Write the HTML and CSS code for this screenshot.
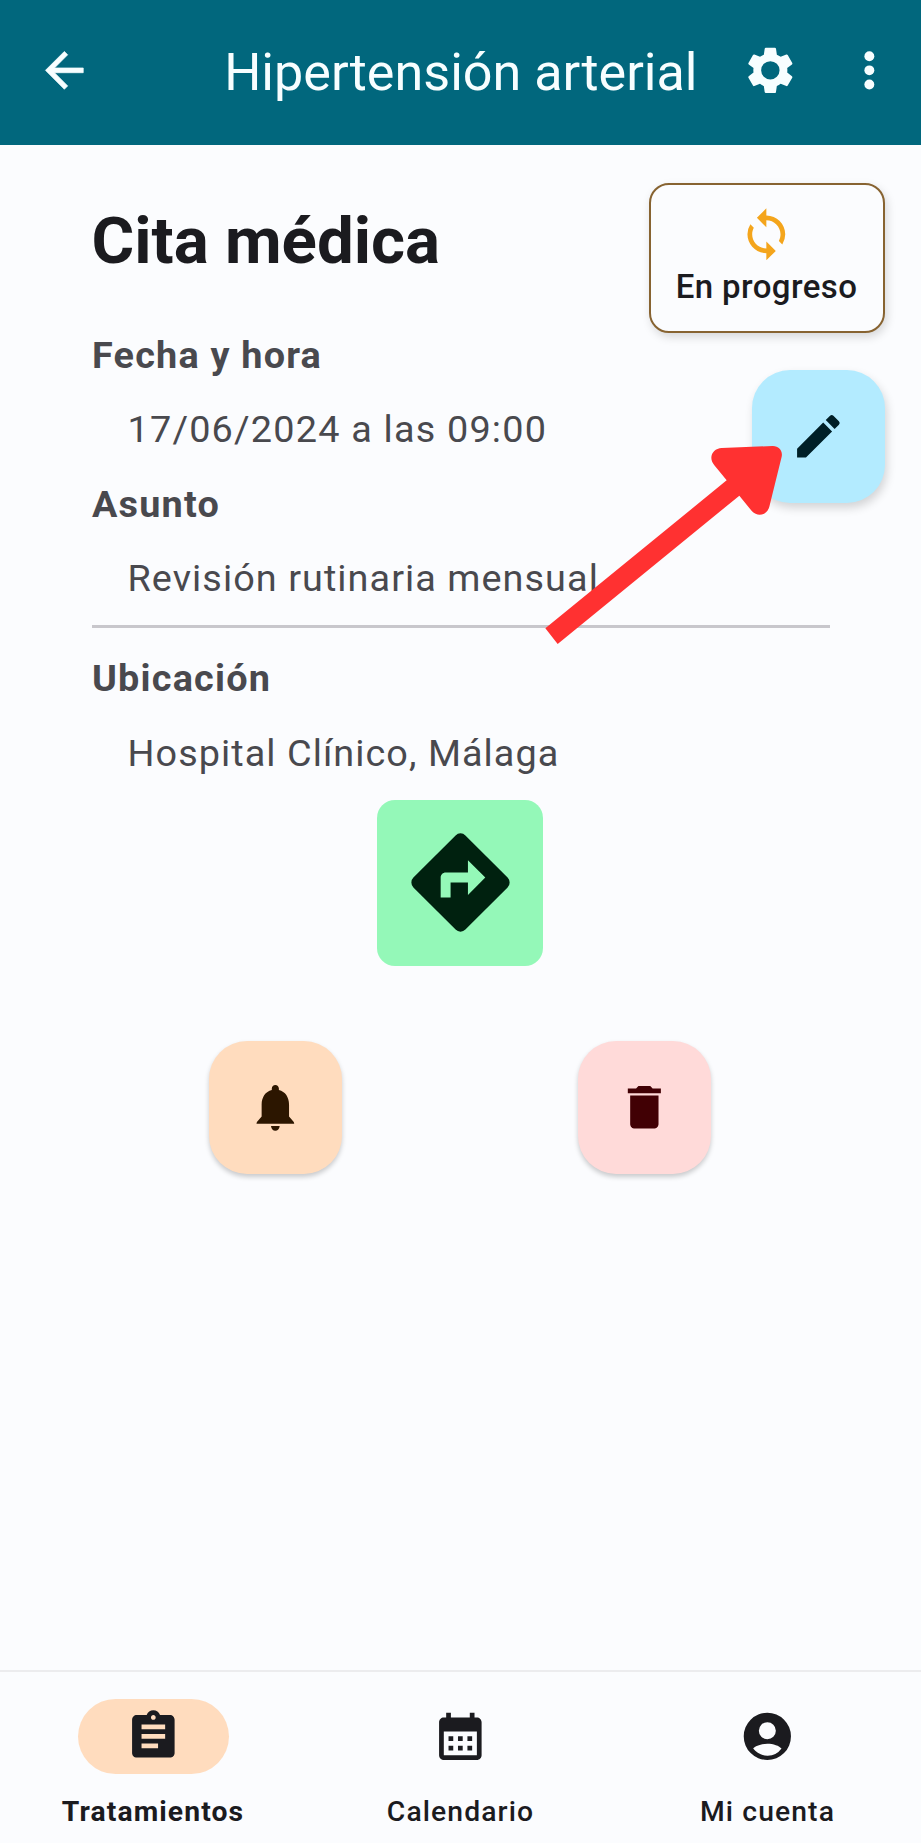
FILE: index.html
```html
<!DOCTYPE html>
<html lang="es">
<head>
<meta charset="utf-8">
<title>Cita médica</title>
<link rel="stylesheet" href="styles.css">
</head>
<body>
<div class="app">
  <header class="topbar">
    <svg class="icon back" viewBox="0 0 24 24"><path d="M20 11H7.83l5.59-5.59L12 4l-8 8 8 8 1.41-1.41L7.83 13H20z"/></svg>
    <h1 class="topbar-title">Hipertensión arterial</h1>
    <svg class="icon gear" viewBox="0 0 24 24"><path d="M19.14 12.94c.04-.3.06-.61.06-.94s-.02-.64-.07-.94l2.03-1.58c.18-.14.23-.41.12-.61l-1.92-3.32c-.12-.22-.37-.29-.59-.22l-2.39.96c-.5-.38-1.03-.7-1.62-.94l-.36-2.54c-.04-.24-.24-.41-.48-.41h-3.84c-.24 0-.43.17-.47.41l-.36 2.54c-.59.24-1.13.57-1.62.94l-2.39-.96c-.22-.08-.47 0-.59.22L2.74 8.87c-.12.21-.08.47.12.61l2.03 1.58c-.05.3-.09.63-.09.94s.02.64.07.94l-2.03 1.58c-.18.14-.23.41-.12.61l1.92 3.32c.12.22.37.29.59.22l2.39-.96c.5.38 1.03.7 1.62.94l.36 2.54c.05.24.24.41.48.41h3.84c.24 0 .44-.17.47-.41l.36-2.54c.59-.24 1.13-.56 1.62-.94l2.39.96c.22.08.47 0 .59-.22l1.92-3.32c.12-.22.07-.47-.12-.61l-2.01-1.58zM12 15.9a3.9 3.9 0 1 1 0-7.8 3.9 3.9 0 0 1 0 7.8z"/></svg>
    <svg class="icon more" viewBox="0 0 24 24"><circle cx="12" cy="6" r="2.1"/><circle cx="12" cy="12" r="2.1"/><circle cx="12" cy="18" r="2.1"/></svg>
  </header>

  <main class="content">
    <section class="details">
      <h2 class="heading">Cita médica</h2>
      <dl class="fields">
        <dt>Fecha y hora</dt>
        <dd>17/06/2024 a las 09:00</dd>
        <dt>Asunto</dt>
        <dd class="snug">Revisión rutinaria mensual</dd>
      </dl>
      <hr class="divider">
      <dl class="fields">
        <dt>Ubicación</dt>
        <dd class="snug">Hospital Clínico, Málaga</dd>
      </dl>
    </section>

    <button class="directions">
      <svg viewBox="0 0 24 24"><path fill-rule="evenodd" d="M21.500 11.010l-8.510-8.510a1.400 1.400 0 0 0-1.980 0l-8.510 8.510a1.400 1.400 0 0 0 0 1.980l8.510 8.510a1.400 1.400 0 0 0 1.980 0l8.510-8.510a1.400 1.400 0 0 0 0-1.980zM13.500 14.500V12H10v3H8v-4c0-.55.45-1 1-1h4.500V7.500L17 11l-3.500 3.500z"/></svg>
    </button>

    <div class="actions">
      <button class="fab remind"><svg class="icon" viewBox="0 0 24 24"><path d="M12 21.900c1 0 1.700-.8 1.850-2h-3.700c.15 1.200.85 2 1.850 2zM17.800 15.900v-5.100c0-3-1.600-5.450-4.300-6.100V4c0-.83-.67-1.500-1.500-1.500s-1.500.67-1.500 1.500v.7C7.800 5.350 6.200 7.800 6.200 10.800v5.100L4.200 18.200 4 18.900h16l-.2-.7z"/></svg></button>
      <button class="fab remove"><svg class="icon" viewBox="0 0 24 24"><path d="M6 19c0 1.100.9 2 2 2h8c1.100 0 2-.9 2-2V7H6zM19 4h-3.500l-1-1h-5l-1 1H5v2h14z"/></svg></button>
    </div>

    <aside class="side">
      <div class="status">
        <svg class="icon" viewBox="0 0 24 24"><path d="M12 4V1L8 5l4 4V6c3.310 0 6 2.690 6 6 0 1.010-.25 1.970-.7 2.800l1.460 1.460A7.930 7.930 0 0 0 20 12c0-4.420-3.580-8-8-8zM12 18c-3.310 0-6-2.690-6-6 0-1.010.25-1.970.7-2.800L5.240 7.740A7.930 7.930 0 0 0 4 12c0 4.420 3.580 8 8 8v3l4-4-4-4z"/></svg>
        <span>En progreso</span>
      </div>
      <button class="fab edit"><svg class="icon" viewBox="0 0 24 24"><path d="M3 17.250V21h3.750L17.810 9.940l-3.750-3.750zM20.710 7.040a1 1 0 0 0 0-1.410l-2.340-2.340a1 1 0 0 0-1.410 0l-1.830 1.830 3.750 3.750z"/></svg></button>
    </aside>

    <svg class="pointer" viewBox="0 0 1203 960"><path d="M76 865L620 421L583 376C563 352 579 325 605 324L757 318C776 317 789 332 785 350L748 500C741 526 713 532 696 514L658 467L113 912Z"/></svg>
  </main>

  <nav class="tabs">
    <a class="tab active">
      <span class="pill"><svg class="icon" viewBox="0 0 24 24"><path fill-rule="evenodd" d="M19 3h-4.180C14.400 1.840 13.300 1 12 1s-2.400.84-2.820 2H5c-1.100 0-2 .9-2 2v14c0 1.100.9 2 2 2h14c1.100 0 2-.9 2-2V5c0-1.100-.9-2-2-2zM12 3c.55 0 1 .45 1 1s-.45 1-1 1-1-.45-1-1 .45-1 1-1zM14 17H7v-2h7zM17 13H7v-2h10zM17 9H7V7h10z"/></svg></span>
      <span class="label">Tratamientos</span>
    </a>
    <a class="tab">
      <span class="pill"><svg class="icon" viewBox="0 0 24 24"><path fill-rule="evenodd" d="M19 4h-1V2h-2v2H8V2H6v2H5c-1.110 0-2 .9-2 2v14c0 1.100.89 2 2 2h14c1.100 0 2-.9 2-2V6c0-1.100-.9-2-2-2zM19 20H5V10h14zM7 12h2v2H7zM11 12h2v2h-2zM15 12h2v2h-2zM7 16h2v2H7zM11 16h2v2h-2zM15 16h2v2h-2z"/></svg></span>
      <span class="label">Calendario</span>
    </a>
    <a class="tab">
      <span class="pill"><svg class="icon" viewBox="0 0 24 24"><path fill-rule="evenodd" d="M12 2a10 10 0 1 0 0 20 10 10 0 0 0 0-20zM12 6a3.600 3.600 0 1 1 0 7.200 3.600 3.600 0 0 1 0-7.200zM12 20.200c-2.500 0-4.710-1.280-6-3.020.9-1.200 3.500-2.080 6-2.080s5.100.88 6 2.080A7.200 7.200 0 0 1 12 20.200z"/></svg></span>
      <span class="label">Mi cuenta</span>
    </a>
  </nav>
</div>
</body>
</html>
```
FILE: styles.css
```css
* { box-sizing: border-box; }

body {
  margin: 0;
  background: #fbfcfe;
  font-family: Roboto, "Noto Sans", sans-serif;
  color: #1b1b1f;
}

h1, h2, dl, dd { margin: 0; }

button {
  border: 0;
  padding: 0;
  display: flex;
  align-items: center;
  justify-content: center;
}

.icon {
  width: 56.700px;
  height: 56.700px;
  flex: none;
  display: block;
  fill: currentColor;
}

.app {
  height: 1843px;
  display: flex;
  flex-direction: column;
  overflow: hidden;
}

/* Top bar */
.topbar {
  height: 145px;
  flex: none;
  display: flex;
  align-items: center;
  padding: 0 23px 5px 36px;
  background: #01677d;
  color: #f7feff;
}

.back {
  stroke: currentColor;
  stroke-width: .3;
  stroke-linejoin: round;
}

.topbar-title {
  flex: 1;
  margin-left: 131.500px;
  padding-top: 5px;
  font-size: 52.100px;
  font-weight: 400;
  line-height: 66px;
  white-space: nowrap;
}

.gear { margin-right: 42.500px; }

/* Appointment */
.content {
  position: relative;
  flex: 1;
  display: flex;
  flex-direction: column;
  align-items: center;
}

.details {
  width: 738px;
  padding-top: 56px;
}

.heading {
  font-size: 65.400px;
  font-weight: 700;
  line-height: 80px;
}

.fields {
  display: grid;
  row-gap: 17.700px;
  margin-top: 45.900px;
  padding-left: .5px;
  font-size: 37.800px;
  line-height: 56.700px;
  letter-spacing: 1.200px;
  color: #49494e;
}

.fields dt { font-weight: 700; }
.fields dd { padding-left: 35.500px; }
.fields .snug { letter-spacing: 1.060px; }

.divider {
  height: 3px;
  margin: 18px 0 0;
  border: 0;
  background: #c8c7cc;
}

.divider + .fields { margin-top: 22.700px; }

.directions {
  width: 166px;
  height: 166px;
  margin: 18px 1px 0 0;
  border-radius: 18px;
  background: #94f8b8;
  color: #00210f;
}

.directions svg {
  width: 119px;
  height: 119px;
  fill: currentColor;
}

.actions {
  width: 738px;
  display: flex;
  justify-content: space-around;
  margin: 75px 1px 0 0;
}

.fab {
  width: 133px;
  height: 133px;
  border-radius: 38px;
  box-shadow: 0 3px 5px rgba(0, 0, 0, .2);
}

.remind { background: #ffdcbe; color: #2c1600; }
.remove { background: #ffdad9; color: #410004; }

/* Floating status card and edit button */
.side {
  position: absolute;
  top: 37.500px;
  right: 36.500px;
  display: flex;
  flex-direction: column;
  align-items: flex-end;
  gap: 37px;
}

.status {
  width: 236px;
  height: 150.500px;
  display: flex;
  flex-direction: column;
  align-items: center;
  padding-top: 21px;
  border: 2.500px solid #876331;
  border-radius: 20px;
  background: #fbfcfe;
  box-shadow: 2px 4px 10px rgba(0, 0, 0, .15);
  font-size: 33px;
  font-weight: 500;
  line-height: 49px;
  letter-spacing: .4px;
}

.status .icon { color: #f4a51c; }

.edit {
  background: #b3ebff;
  color: #001f27;
  box-shadow: 2px 5px 10px rgba(0, 0, 0, .16);
}

.pointer {
  position: absolute;
  left: 520px;
  top: 195px;
  width: 401px;
  height: 320px;
  fill: #ff3131;
}

/* Bottom navigation */
.tabs {
  flex: none;
  height: 173px;
  display: grid;
  grid-template-columns: repeat(3, 1fr);
  border-top: 2px solid #ececee;
}

.tab {
  display: flex;
  flex-direction: column;
  align-items: center;
  padding-top: 26.500px;
}

.pill {
  width: 151px;
  height: 75.500px;
  display: flex;
  align-items: center;
  justify-content: center;
  border-radius: 38px;
}

.active .pill { background: #ffdcbe; }
.active { padding-right: 1px; }

.label {
  margin-top: 19px;
  font-size: 28.300px;
  font-weight: 500;
  line-height: 38px;
  letter-spacing: 1.100px;
}

.active .label { font-weight: 700; }
```
